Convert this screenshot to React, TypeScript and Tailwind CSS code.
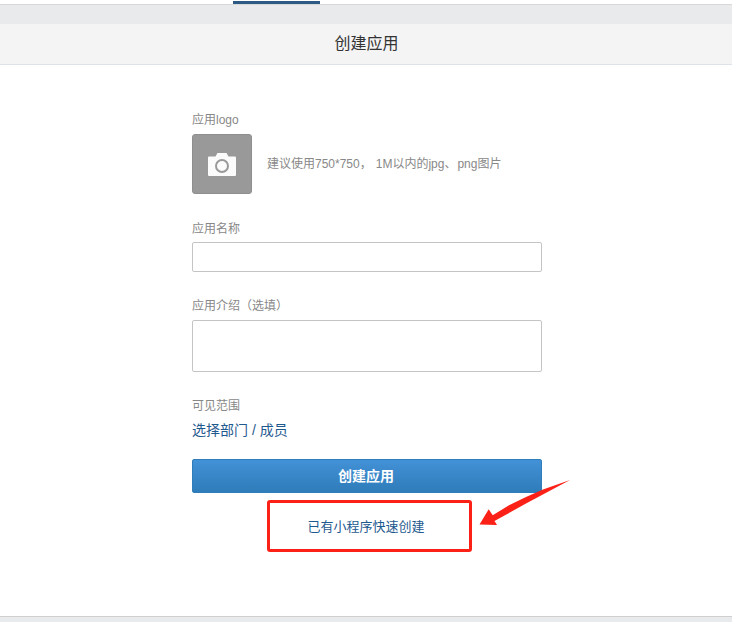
const FONT = "font-['Liberation_Sans','Noto_Sans_CJK_SC',sans-serif]";

function Label({ children, className = "" }: { children: React.ReactNode; className?: string }) {
  return <div className={`text-xs leading-[18px] text-[#888] ${className}`}>{children}</div>;
}

function Camera() {
  return (
    <svg width="28" height="23" viewBox="0 0 28 23">
      <path
        d="M1 3.5h6.5L9.5 0h9l2 3.5H27a1 1 0 0 1 1 1V22a1 1 0 0 1-1 1H1a1 1 0 0 1-1-1V4.500a1 1 0 0 1 1-1z"
        fill="#fbfbfb"
      />
      <circle cx="14" cy="13" r="6" fill="none" stroke="#999" strokeWidth="2" />
    </svg>
  );
}

export default function App() {
  return (
    <div className={`relative flex h-[622px] w-[732px] flex-col overflow-hidden bg-[#e9eaec] ${FONT}`}>
      <div className="h-[4px] shrink-0 bg-white pl-[233px] pt-px">
        <div className="h-[3px] w-[87px] bg-[#2c5a85]" />
      </div>
      <div className="h-[20px] shrink-0 border-t border-[#d8d8d8] bg-[#e9eaec]" />
      <div className="flex h-[41px] shrink-0 items-center justify-center border-b border-[#dde3e8] bg-[#f4f4f4] pl-px text-base text-[#333]">
        创建应用
      </div>

      <div className="h-[551px] shrink-0 bg-white pl-[192px] pt-[46px]">
        <div className="w-[350px]">
          <Label>应用logo</Label>
          <div className="mt-[5px] flex items-center gap-[15px]">
            <div className="flex h-[60px] w-[60px] items-center justify-center rounded-[3px] border border-[#8f8f8f] bg-[#999]">
              <Camera />
            </div>
            <span className="text-xs text-[#888]">
              建议使用750*750，<span className="ml-[4px]">1M以内的jpg、</span>
              <span className="ml-px">png图片</span>
            </span>
          </div>

          <Label className="mt-[26px]">应用名称</Label>
          <div className="mt-[4px] h-[30px] rounded-[2px] border border-[#c4c4c4] bg-white" />

          <Label className="mt-[25px]">应用介绍（选填）</Label>
          <div className="mt-[5px] h-[52px] rounded-[2px] border border-[#c4c4c4] bg-white" />

          <Label className="mt-[25px]">可见范围</Label>
          <div className="mt-[5px] text-sm leading-[20px] text-[#1f5a8f]">选择部门 / 成员</div>

          <div className="mt-[19px] flex h-[34px] items-center justify-center rounded-[2px] border border-[#2f7dba] bg-gradient-to-b from-[#4391d7] to-[#2e7cb9] pr-[2px] text-sm font-bold text-white">
            创建应用
          </div>
          <div className="mt-[25px] pr-[2px] text-center text-[13px] leading-[18px] text-[#1f5a8f]">
            已有小程序快速创建
          </div>
        </div>
      </div>
      <div className="flex-1 border-t border-[#cfcfcf] bg-[#e9eaec]" />

      {/* red annotation over the screenshot */}
      <div className="absolute left-[267px] top-[500px] h-[52px] w-[205px] rounded-[3px] border-[3px] border-[#fb2116]" />
      <svg className="absolute left-0 top-0" width="732" height="622" viewBox="0 0 732 622">
        <polygon
          points="479.500,524.500 488.700,509.300 492.700,515.300 509,505.300 526,497 543,489.500 570,480 526,503.500 494.500,521 497,525"
          fill="#fb2116"
        />
      </svg>
    </div>
  );
}
